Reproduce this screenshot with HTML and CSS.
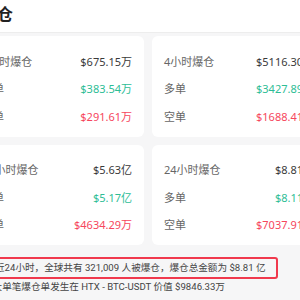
FILE: index.html
```html
<!DOCTYPE html>
<html lang="zh-CN">
<head>
  <meta charset="UTF-8">
  <meta name="viewport" content="width=device-width, initial-scale=1.0">
  <title>爆仓</title>
  <link rel="stylesheet" href="styles.css">
</head>
<body>
  <div class="page">
    <div class="top">
      <h1>爆仓</h1>
    </div>

    <div class="content">
      <div class="grid">
        <div class="card">
          <div class="row head"><span>1小时爆仓</span><span class="val">$675.15万</span></div>
          <div class="row"><span>多单</span><span class="val up">$383.54万</span></div>
          <div class="row"><span>空单</span><span class="val down">$291.61万</span></div>
        </div>
        <div class="card">
          <div class="row head"><span>4小时爆仓</span><span class="val">$5116.30万</span></div>
          <div class="row"><span>多单</span><span class="val up">$3427.89万</span></div>
          <div class="row"><span>空单</span><span class="val down">$1688.41万</span></div>
        </div>
        <div class="card">
          <div class="row head"><span>12小时爆仓</span><span class="val">$5.63亿</span></div>
          <div class="row"><span>多单</span><span class="val up">$5.17亿</span></div>
          <div class="row"><span>空单</span><span class="val down">$4634.29万</span></div>
        </div>
        <div class="card">
          <div class="row head"><span>24小时爆仓</span><span class="val">$8.81亿</span></div>
          <div class="row"><span>多单</span><span class="val up">$8.11亿</span></div>
          <div class="row"><span>空单</span><span class="val down">$7037.91万</span></div>
        </div>
      </div>

      <div class="summary">
        <p class="total">近24小时，全球共有 321,009 人被爆仓，爆仓总金额为 $8.81 亿</p>
        <p>最大单笔爆仓单发生在 HTX - BTC-USDT 价值 $9846.33万</p>
      </div>
    </div>
  </div>
</body>
</html>
```

FILE: styles.css
```css
*, *::before, *::after {
  box-sizing: border-box;
}

:root {
  --bg-color: #f6f6f7;
  --card-bg: #fff;
  --text-color: #3a3a3a;
  --label-color: #666;
  --up-color: #2ebd96;
  --down-color: #f6465d;
  --border-color: #ededed;
}

body {
  margin: 0;
  font-family: "Noto Sans", "Noto Sans CJK SC", sans-serif;
  background-color: var(--bg-color);
  color: var(--text-color);
  overflow: hidden;
}

.page {
  margin-left: -30px;
  width: 360px;
}

.top {
  background-color: var(--card-bg);
  border-bottom: 1px solid var(--border-color);
  height: 33px;
  padding-left: 11px;
}

h1 {
  margin: 0;
  font-size: 16px;
  font-weight: 700;
  line-height: 28px;
  color: #222;
}

.content {
  padding-top: 3px;
}

.grid {
  display: grid;
  grid-template-columns: 174px 174px;
  gap: 8px;
}

.card {
  background-color: var(--card-bg);
  border-radius: 6px;
  padding: 11px 12px 7px;
}

.row {
  display: flex;
  justify-content: space-between;
  align-items: center;
  height: 27.5px;
  font-size: 11px;
  color: var(--label-color);
}

.val {
  color: var(--text-color);
}

.val.up {
  color: var(--up-color);
}

.val.down {
  color: var(--down-color);
}

.summary {
  padding: 12px 0 0 13px;
  font-family: Roboto, "Noto Sans CJK SC", sans-serif;
  font-size: 9.6px;
  color: #444;
  white-space: nowrap;
}

.summary p {
  margin: 0;
  line-height: 16px;
}

.summary .total {
  width: fit-content;
  margin-left: -2px;
  padding: 1px 10px 1px 12px;
  line-height: 16px;
  border: 2px solid #f0394d;
  border-radius: 3px;
}
```
